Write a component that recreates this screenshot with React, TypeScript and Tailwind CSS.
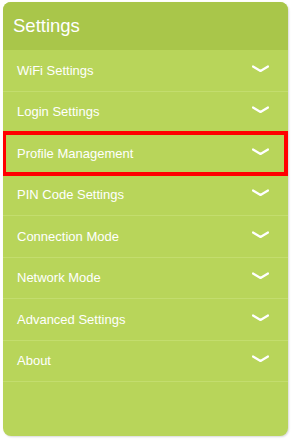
const items = [
  "WiFi Settings",
  "Login Settings",
  "Profile Management",
  "PIN Code Settings",
  "Connection Mode",
  "Network Mode",
  "Advanced Settings",
  "About",
];

function Chevron() {
  return (
    <svg width="17" height="8" viewBox="0 0 17 8" className="shrink-0 mb-[3px]">
      <path d="M1 1.5 L8.5 6 L16 1.5" fill="none" stroke="#ffffff" strokeWidth="2.2" strokeLinecap="round" strokeLinejoin="round" />
    </svg>
  );
}

export default function App() {
  return (
    <div className="w-[291px] h-[439px] bg-white pt-[2px] pl-[3px]" style={{ fontFamily: '"Liberation Sans", Arial, sans-serif' }}>
      <div className="relative w-[285px] h-[434px] rounded-[8px] bg-[#b8d55a] shadow-[1px_1px_2px_rgba(0,0,0,0.15)] overflow-hidden flex flex-col">
        <div className="h-[48px] bg-[#a9c64a] flex items-center pl-[10px] text-white text-[18.5px] shrink-0">
          Settings
        </div>
        {items.map((label) => (
          <div
            key={label}
            className="h-[41.5px] shrink-0 flex items-center justify-between pl-[14px] pr-[19px] border-b border-[#c3dd6e] text-white text-[13px]"
          >
            <span>{label}</span>
            <Chevron />
          </div>
        ))}
        <div className="flex-1" />
        {/* highlight box */}
        <div className="absolute left-[-1px] top-[129px] w-[286px] h-[45px] border-[4px] border-[#ff0000] pointer-events-none" />
      </div>
    </div>
  );
}
